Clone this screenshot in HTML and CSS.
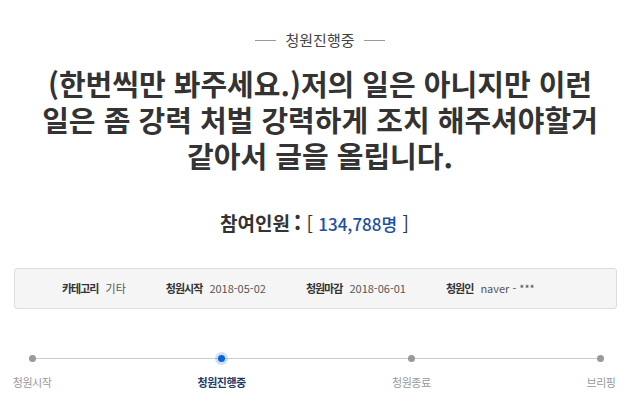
FILE: index.html
```html
<!DOCTYPE html>
<html lang="ko">
<head>
  <meta charset="UTF-8">
  <title>청원진행중</title>
  <link rel="stylesheet" href="styles.css">
</head>
<body>

  <div class="status">
    <span class="status-line"></span>
    <span class="status-text">청원진행중</span>
    <span class="status-line"></span>
  </div>

  <h1 class="title">(한번씩만 봐주세요.)저의 일은 아니지만 이런 일은 좀 강력 처벌 강력하게 조치 해주셔야할거 같아서 글을 올립니다.</h1>

  <p class="count">참여인원<span class="colon">:</span> <span class="bracket">[</span> <span class="num">134,788명</span> <span class="bracket">]</span></p>

  <ul class="info">
    <li><b>카테고리</b> 기타</li>
    <li><b>청원시작</b> 2018-05-02</li>
    <li><b>청원마감</b> 2018-06-01</li>
    <li><b>청원인</b> naver - ***</li>
  </ul>

  <ol class="steps">
    <li class="step"><span class="dot"></span><span class="label">청원시작</span></li>
    <li class="step on"><span class="dot"></span><span class="label">청원진행중</span></li>
    <li class="step"><span class="dot"></span><span class="label">청원종료</span></li>
    <li class="step"><span class="dot"></span><span class="label">브리핑</span></li>
  </ol>

</body>
</html>
```

FILE: styles.css
```css
body {
  margin: 0;
  background: #fff;
  color: #333;
  font-family: "Noto Sans CJK KR", "Noto Sans", sans-serif;
}

.status {
  display: flex;
  justify-content: center;
  align-items: center;
  gap: 9px;
  padding-top: 30px;
  height: 20px;
  line-height: 20px;
}

.status-line {
  width: 21px;
  height: 1px;
  background-color: #999;
}

.status-text {
  font-size: 15px;
  color: #444;
}

.title {
  max-width: 556px;
  margin: 15px auto 0;
  font-size: 29px;
  line-height: 36px;
  font-weight: 700;
  text-align: center;
  color: #333;
}

.count {
  margin: 36px 0 0;
  padding-right: 11px;
  font-size: 19px;
  line-height: 24px;
  font-weight: 700;
  text-align: center;
  color: #333;
}

.colon { margin-left: 4px; font-size: 22px; }
.bracket { font-weight: 400; font-size: 19px; }
.num { color: #1c50a0; font-weight: 500; font-size: 17px; }

.info {
  display: flex;
  gap: 40px;
  box-sizing: border-box;
  width: 603px;
  margin: 32px 0 0 14px;
  padding: 0 0 0 47px;
  list-style: none;
  border: 1px solid #ddd;
  border-radius: 3px;
  background-color: #f5f5f5;
  font-size: 11px;
  line-height: 39px;
  color: #555;
}

.info b {
  margin-right: 4px;
  color: #333;
  letter-spacing: -1px;
}

.steps {
  display: flex;
  justify-content: space-between;
  margin: 46px 39px 0 32px;
  padding: 0;
  list-style: none;
  background: linear-gradient(#ccc, #ccc) no-repeat 0 3px / 100% 1px;
}

.step {
  display: flex;
  flex-direction: column;
  align-items: center;
  width: 0;
  white-space: nowrap;
}

.dot {
  width: 7px;
  height: 7px;
  border-radius: 50%;
  background-color: #999;
}

.label {
  margin-top: 12px;
  font-size: 11px;
  line-height: 16px;
  letter-spacing: -0.5px;
  color: #999;
}

.on .dot {
  background-color: #0a64d2;
  box-shadow: 0 0 0 3px rgba(10, 100, 210, 0.2);
}

.on .label {
  font-weight: 700;
  color: #1f3a66;
}
```
